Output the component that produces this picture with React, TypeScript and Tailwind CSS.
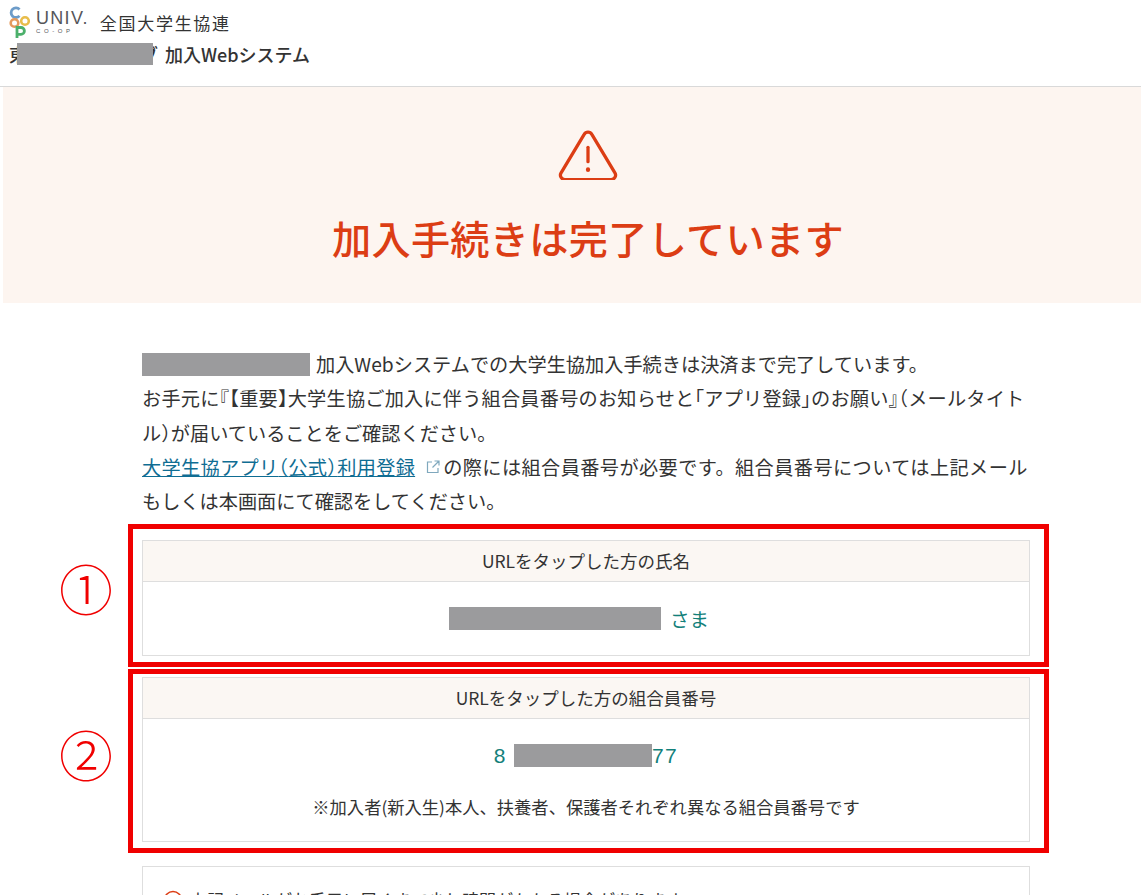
import React from "react";

const jp = { fontFamily: '"Noto Sans CJK JP", "Noto Sans", sans-serif' };
const lat = { fontFamily: '"Liberation Sans", sans-serif' };

function Redact({ className }: { className: string }) {
  return <span className={`inline-block shrink-0 bg-[#9b9b9d] ${className}`} />;
}

function Logo() {
  return (
    <svg width="26" height="36" viewBox="0 0 26 36" fill="none" className="shrink-0">
      <path d="M10.5 4.5a4.8 4.8 0 1 0 0 6.4" stroke="#6d9cc9" strokeWidth="2.8" />
      <circle cx="5.5" cy="18" r="3.8" stroke="#e59a5c" strokeWidth="2.6" />
      <circle cx="16" cy="16" r="3.8" stroke="#e8bd4a" strokeWidth="2.6" />
      <path d="M8 33V22.5h4a3.4 3.4 0 0 1 0 6.8H8" stroke="#4cb06b" strokeWidth="2.8" />
    </svg>
  );
}

function Card({ title, children }: { title: string; children: React.ReactNode }) {
  return (
    <div className="border border-[#dedede] bg-white">
      <div className="flex h-[41px] items-center justify-center border-b border-[#dedede] bg-[#fbf7f3] text-[17.5px] text-[#333]">
        {title}
      </div>
      {children}
    </div>
  );
}

function H({ children }: { children: React.ReactNode }) {
  return <span className="[font-feature-settings:'halt']">{children}</span>;
}

export default function App() {
  return (
    <div className="relative h-[895px] w-[1141px] overflow-hidden bg-white text-[#333]" style={jp}>
      <header className="h-[87px] border-b border-[#d9d9d9] pl-[9px]">
        <div className="flex h-[40px] items-center pt-[5px]">
          <Logo />
          <div className="ml-[1px] flex flex-col leading-none">
            <span className="text-[18px] leading-[15px] tracking-[1.3px] text-[#55565a]" style={lat}>
              UNIV.
            </span>
            <span className="mt-[2px] text-[6px] leading-[6px] tracking-[3.6px] text-[#55565a]" style={lat}>
              CO-OP
            </span>
          </div>
          <span className="ml-[11px] text-[17px] tracking-[1.7px] text-[#333]">全国大学生協連</span>
        </div>
        <div className="flex h-[28px] items-center text-[18px] font-medium text-[#333]">
          <span className="flex w-[8px] justify-start overflow-hidden">東</span>
          <Redact className="h-[22px] w-[136px]" />
          <span className="flex w-[5px] justify-end overflow-hidden">ブ</span>
          <span className="ml-[7px]">加入Webシステム</span>
        </div>
      </header>

      <section className="ml-[3px] flex h-[216px] flex-col items-center bg-[#fdf5f0] pt-[43px] pl-[32px]">
        <svg width="62" height="50" viewBox="0 0 64 52" fill="none" stroke="#dc3d14" strokeWidth="3.4" strokeLinecap="round" strokeLinejoin="round">
          <path d="M28 4.5 4 44.5a4.6 4.6 0 0 0 4 7h48a4.6 4.6 0 0 0 4-7L36 4.5a4.6 4.6 0 0 0-8 0Z" />
          <path d="M32 18v15" />
          <path d="M32 41v.5" strokeWidth="4.4" />
        </svg>
        <h1 className="mt-[29px] text-[39.2px] leading-[56px] font-medium tracking-[0.3px] text-[#dc3d14]">加入手続きは完了しています</h1>
      </section>

      <main className="ml-[128px] w-[921px] pt-[44px]">
        <div className="mb-[6px] ml-[14px] text-[19.2px] leading-[34.3px] text-[#333]">
          <p className="flex h-[34.3px] items-center whitespace-nowrap">
            <Redact className="h-[23px] w-[168px]" />
            <span className="ml-[6px]">加入Webシステムでの大学生協加入手続きは決済まで完了しています。</span>
          </p>
          <p className="whitespace-nowrap tracking-[0.2px]">
            お手元に<H>『【</H>重要<H>】</H>大学生協ご加入に伴う組合員番号のお知らせと<H>「</H>アプリ登録<H>」</H>のお願い<H>』（</H>メールタイト
          </p>
          <p className="whitespace-nowrap">
            ル<H>）</H>が届いていることをご確認ください。
          </p>
          <p className="flex h-[34.3px] items-center whitespace-nowrap">
            <a className="tracking-[0.3px] text-[#0f6d93] underline">
              大学生協アプリ<H>（</H>公式<H>）</H>利用登録
            </a>
            <svg width="16" height="16" viewBox="0 0 16 16" fill="none" stroke="#7fa8bd" strokeWidth="1.2" className="mr-[2px] ml-[10px]">
              <path d="M7 3H2.5v10.5H13V9M9.5 2H14v4.5M14 2 7.5 8.5" />
            </svg>
            <span className="tracking-[0.4px]">の際には組合員番号が必要です。組合員番号については上記メール</span>
          </p>
          <p className="whitespace-nowrap">もしくは本画面にて確認をしてください。</p>
        </div>

        <div className="border-[5px] border-[#f00000] pt-[11px] pr-[14px] pb-[6px] pl-[9px]">
          <Card title="URLをタップした方の氏名">
            <div className="flex h-[73px] items-center justify-center pr-[14px] text-[19.5px] text-[#13807a]">
              <Redact className="h-[23px] w-[212px]" />
              <span className="ml-[9px]">さま</span>
            </div>
          </Card>
        </div>

        <div className="mt-[2px] border-[5px] border-[#f00000] pt-[3px] pr-[14px] pb-[6px] pl-[9px]">
          <Card title="URLをタップした方の組合員番号">
            <div className="flex h-[122px] flex-col items-center">
              <div className="mt-[22px] flex h-[28px] items-center text-[21px] tracking-[1.5px] text-[#13807a]" style={lat}>
                <span>8</span>
                <Redact className="ml-[7px] h-[23px] w-[138px]" />
                <span>77</span>
              </div>
              <p className="mt-[26px] text-[17.3px] leading-[24px] text-[#333]">※加入者(新入生)本人、扶養者、保護者それぞれ異なる組合員番号です</p>
            </div>
          </Card>
        </div>

        <div className="mt-[13px] ml-[14px] h-[60px] w-[888px] border border-[#dedede] pt-[21px] pl-[20px]">
          <div className="flex items-center text-[17px] leading-[24px]">
            <svg width="20" height="20" viewBox="0 0 20 20" fill="none" stroke="#dc3d14" strokeWidth="1.6" className="mr-[7px] shrink-0">
              <circle cx="10" cy="10" r="8.5" />
              <path d="M10 5v6.5M10 14v1" />
            </svg>
            <span>上記メールがお手元に届くまで少し時間がかかる場合があります。</span>
          </div>
        </div>
      </main>

      <span className="absolute top-[546px] left-[52px] w-[68px] text-center text-[54px] leading-[84px] font-light text-[#f00000]">①</span>
      <span className="absolute top-[712px] left-[52px] w-[68px] text-center text-[54px] leading-[84px] font-light text-[#f00000]">②</span>
    </div>
  );
}
